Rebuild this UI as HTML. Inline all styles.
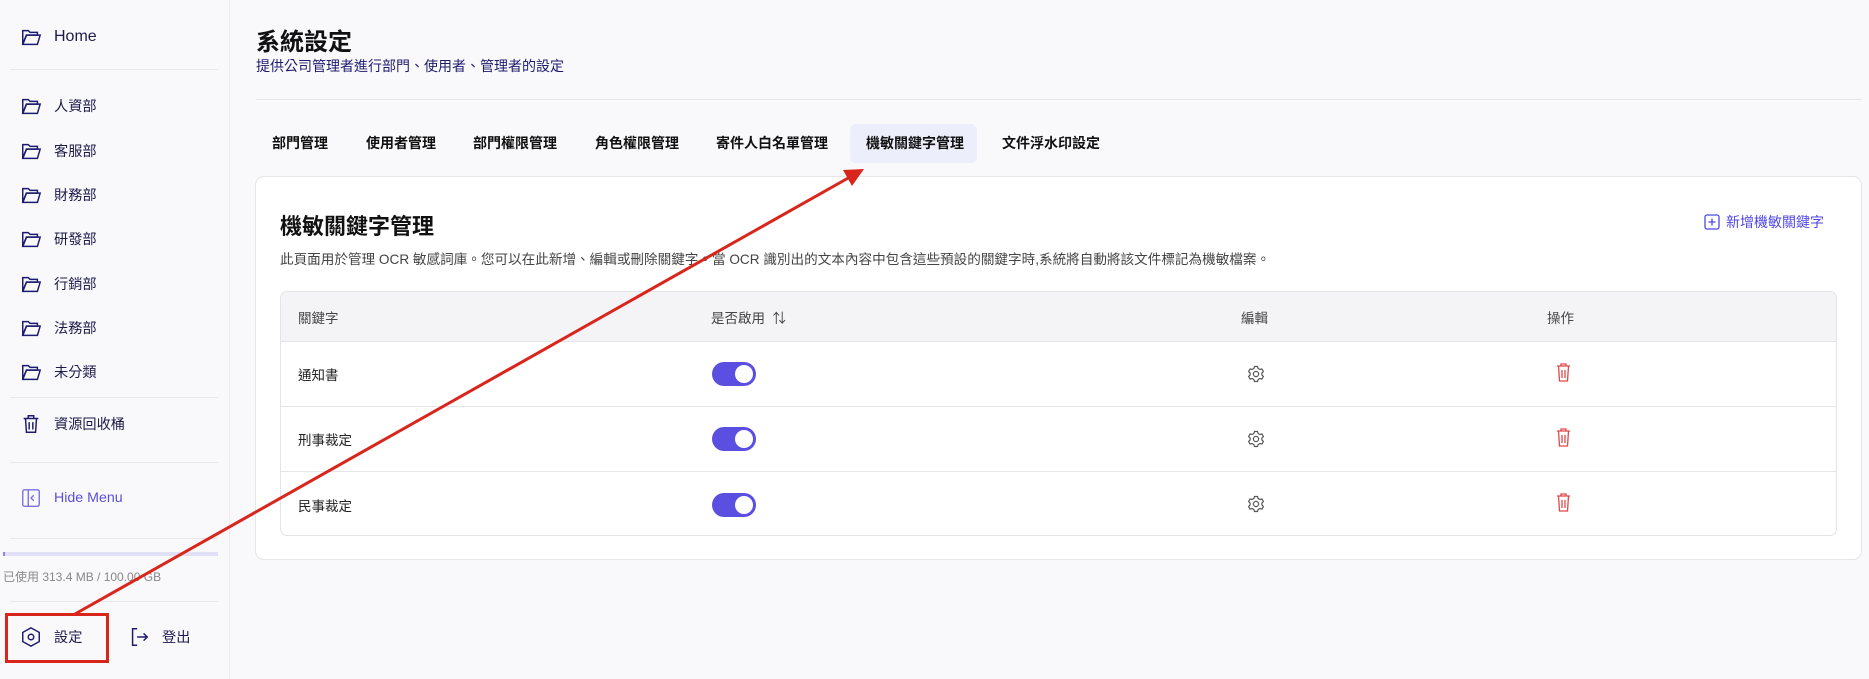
<!DOCTYPE html>
<html><head><meta charset="utf-8"><style>
*{box-sizing:border-box;margin:0;padding:0}
body{width:1869px;height:679px;overflow:hidden;background:#f9f9fb;font-family:"Liberation Sans","Noto Sans CJK TC",sans-serif;position:relative;color:#111}
.sb{position:absolute;left:0;top:0;width:230px;height:679px;border-right:1px solid #ececf0;background:#f9f9fb}
.it{position:absolute;left:20px;display:flex;align-items:center;font-size:14.2px;color:#1e1b4b;height:24px}
.it svg{margin-right:12px}
.hr{position:absolute;left:10px;width:208px;height:1px;background:#e7e7ec}
.abs{position:absolute}
.tab{position:absolute;top:133px;font-size:14px;font-weight:bold;color:#111;height:20px;line-height:20px}
.card{position:absolute;left:255px;top:176px;width:1607px;height:384px;background:#fff;border:1px solid #e6e6ea;border-radius:9px}
.tbl{position:absolute;left:280px;top:291px;width:1557px;height:245px;border:1px solid #e4e4e8;border-radius:7px;overflow:hidden}
.th{position:absolute;left:0;top:0;width:100%;height:50px;background:#f4f4f6;border-bottom:1px solid #e4e4e8}
.row{position:absolute;left:0;width:100%;height:65px;border-bottom:1px solid #e6e6ea}
.c{position:absolute;font-size:13.5px;color:#222;transform:translateY(-50%);top:50%}
.tg{position:absolute;width:44px;height:24px;border-radius:12px;background:#5a4fe0;top:50%;transform:translateY(-50%)}
.tg::after{content:"";position:absolute;right:3px;top:3px;width:18px;height:18px;border-radius:50%;background:#fff}
</style></head><body>
<div class="sb">
<div class="it" style="top:25px;font-size:16px"><svg width="22" height="22" viewBox="0 0 24 24" fill="none" stroke="#1e1b6e" stroke-width="1.6"><path d="M3 5h6l2 2h8v3H7l-4 10V5z"/><path d="M3 20l4-10h15l-3 10z"/></svg>Home</div>
<div class="hr" style="top:69px"></div>
<div class="it" style="top:94px"><svg width="22" height="22" viewBox="0 0 24 24" fill="none" stroke="#1e1b6e" stroke-width="1.6"><path d="M3 5h6l2 2h8v3H7l-4 10V5z"/><path d="M3 20l4-10h15l-3 10z"/></svg>人資部</div>
<div class="it" style="top:139px"><svg width="22" height="22" viewBox="0 0 24 24" fill="none" stroke="#1e1b6e" stroke-width="1.6"><path d="M3 5h6l2 2h8v3H7l-4 10V5z"/><path d="M3 20l4-10h15l-3 10z"/></svg>客服部</div>
<div class="it" style="top:183px"><svg width="22" height="22" viewBox="0 0 24 24" fill="none" stroke="#1e1b6e" stroke-width="1.6"><path d="M3 5h6l2 2h8v3H7l-4 10V5z"/><path d="M3 20l4-10h15l-3 10z"/></svg>財務部</div>
<div class="it" style="top:227px"><svg width="22" height="22" viewBox="0 0 24 24" fill="none" stroke="#1e1b6e" stroke-width="1.6"><path d="M3 5h6l2 2h8v3H7l-4 10V5z"/><path d="M3 20l4-10h15l-3 10z"/></svg>研發部</div>
<div class="it" style="top:272px"><svg width="22" height="22" viewBox="0 0 24 24" fill="none" stroke="#1e1b6e" stroke-width="1.6"><path d="M3 5h6l2 2h8v3H7l-4 10V5z"/><path d="M3 20l4-10h15l-3 10z"/></svg>行銷部</div>
<div class="it" style="top:316px"><svg width="22" height="22" viewBox="0 0 24 24" fill="none" stroke="#1e1b6e" stroke-width="1.6"><path d="M3 5h6l2 2h8v3H7l-4 10V5z"/><path d="M3 20l4-10h15l-3 10z"/></svg>法務部</div>
<div class="it" style="top:360px"><svg width="22" height="22" viewBox="0 0 24 24" fill="none" stroke="#1e1b6e" stroke-width="1.6"><path d="M3 5h6l2 2h8v3H7l-4 10V5z"/><path d="M3 20l4-10h15l-3 10z"/></svg>未分類</div>
<div class="hr" style="top:397px"></div>
<div class="it" style="top:412px"><svg width="22" height="22" viewBox="0 0 24 24" fill="none" stroke="#1e1b6e" stroke-width="1.6"><path d="M4 6h16M9 6V3h6v3M6 6l1 15h10l1-15M10 10v8M14 10v8"/></svg>資源回收桶</div>
<div class="hr" style="top:462px"></div>
<div class="it" style="top:486px;color:#5b4fd6"><svg width="22" height="22" viewBox="0 0 24 24" fill="none" stroke="#7b70e0" stroke-width="1.5"><rect x="3" y="3" width="18" height="18" rx="2"/><path d="M9 3v18M15 9l-3 3 3 3"/></svg>Hide Menu</div>
<div class="hr" style="top:538px"></div>
<div class="abs" style="left:3px;top:552px;width:215px;height:4px;background:#e2e0f7;border-left:2px solid #8d86e6"></div>
<div class="abs" style="left:3px;top:568px;font-size:12px;color:#888">已使用 313.4 MB / 100.00 GB</div>
<div class="hr" style="top:601px"></div>
<div class="it" style="top:625px;left:20px"><svg width="22" height="22" viewBox="0 0 24 24" fill="none" stroke="#1e1b6e" stroke-width="1.6"><path d="M12 2l9 5v10l-9 5-9-5V7z"/><circle cx="12" cy="12" r="3"/></svg>設定</div>
<div class="it" style="top:625px;left:128px"><svg width="22" height="22" viewBox="0 0 24 24" fill="none" stroke="#1e1b6e" stroke-width="1.6"><path d="M10 3H5v18h5M10 12h11M17 8l4 4-4 4"/></svg>登出</div>
</div>
<div class="abs" style="left:256px;top:22px;font-size:24px;font-weight:bold">系統設定</div>
<div class="abs" style="left:256px;top:56px;font-size:14px;color:#1e1b6e">提供公司管理者進行部門、使用者、管理者的設定</div>
<div class="abs" style="left:256px;top:99px;width:1606px;height:1px;background:#e6e6ea"></div>
<div class="abs" style="left:850px;top:124px;width:127px;height:39px;background:#eceefb;border-radius:6px"></div>
<div class="tab" style="left:272px">部門管理</div>
<div class="tab" style="left:366px">使用者管理</div>
<div class="tab" style="left:473px">部門權限管理</div>
<div class="tab" style="left:595px">角色權限管理</div>
<div class="tab" style="left:716px">寄件人白名單管理</div>
<div class="tab" style="left:866px">機敏關鍵字管理</div>
<div class="tab" style="left:1002px">文件浮水印設定</div>
<div class="card"></div>
<div class="abs" style="left:280px;top:209px;font-size:22px;font-weight:bold">機敏關鍵字管理</div>
<div class="abs" style="left:280px;top:248px;font-size:13.6px;color:#444">此頁面用於管理 OCR 敏感詞庫。您可以在此新增、編輯或刪除關鍵字。當 OCR 識別出的文本內容中包含這些預設的關鍵字時,系統將自動將該文件標記為機敏檔案。</div>
<div class="abs" style="left:1704px;top:212px;display:flex;align-items:center;font-size:14px;color:#4f46e5"><svg width="16" height="16" viewBox="0 0 16 16" fill="none" stroke="#4f46e5" stroke-width="1.3" style="margin-right:6px"><rect x="1" y="1" width="14" height="14" rx="2"/><path d="M8 4.5v7M4.5 8h7"/></svg>新增機敏關鍵字</div>
<div class="tbl">
<div class="th"><div class="c" style="left:17px;color:#444">關鍵字</div><div class="c" style="left:430px;color:#444">是否啟用 &nbsp;⇅</div><div class="c" style="left:960px;color:#444">編輯</div><div class="c" style="left:1266px;color:#444">操作</div></div>
<div class="row" style="top:50px"><div class="c" style="left:17px">通知書</div><div class="tg" style="left:431px"></div></div>
<div class="row" style="top:115px"><div class="c" style="left:17px">刑事裁定</div><div class="tg" style="left:431px"></div></div>
<div class="row" style="top:180px;border:0"><div class="c" style="left:17px">民事裁定</div><div class="tg" style="left:431px"></div></div>
</div>
<svg class="abs" style="left:0;top:0" width="1869" height="679">
<g fill="none" stroke="#555" stroke-width="1.2">
<g id="g1"><circle cx="1256" cy="374" r="2.6"/><path d="M1254.5 366.5h3l.6 2 1.8 1 2-.6 1.5 2.6-1.5 1.5v2l1.5 1.5-1.5 2.6-2-.6-1.8 1-.6 2h-3l-.6-2-1.8-1-2 .6-1.5-2.6 1.5-1.5v-2l-1.5-1.5 1.5-2.6 2 .6 1.8-1z"/></g>
<use href="#g1" y="65"/><use href="#g1" y="130"/>
</g>
<g fill="none" stroke="#e04848" stroke-width="1.3">
<g id="t1"><path d="M1557 366h13M1561 366v-2h5v2M1558.5 366l1 15h8l1-15M1562 370v8M1565 370v8"/></g>
<use href="#t1" y="65"/><use href="#t1" y="130"/>
</g>
<rect x="6.5" y="614.5" width="101" height="47" fill="none" stroke="#d9261c" stroke-width="3"/>
<line x1="75" y1="614" x2="850" y2="177" stroke="#d9261c" stroke-width="3"/>
<polygon points="864,169 843,170 852,186" fill="#d9261c"/>
</svg>
</body></html>
